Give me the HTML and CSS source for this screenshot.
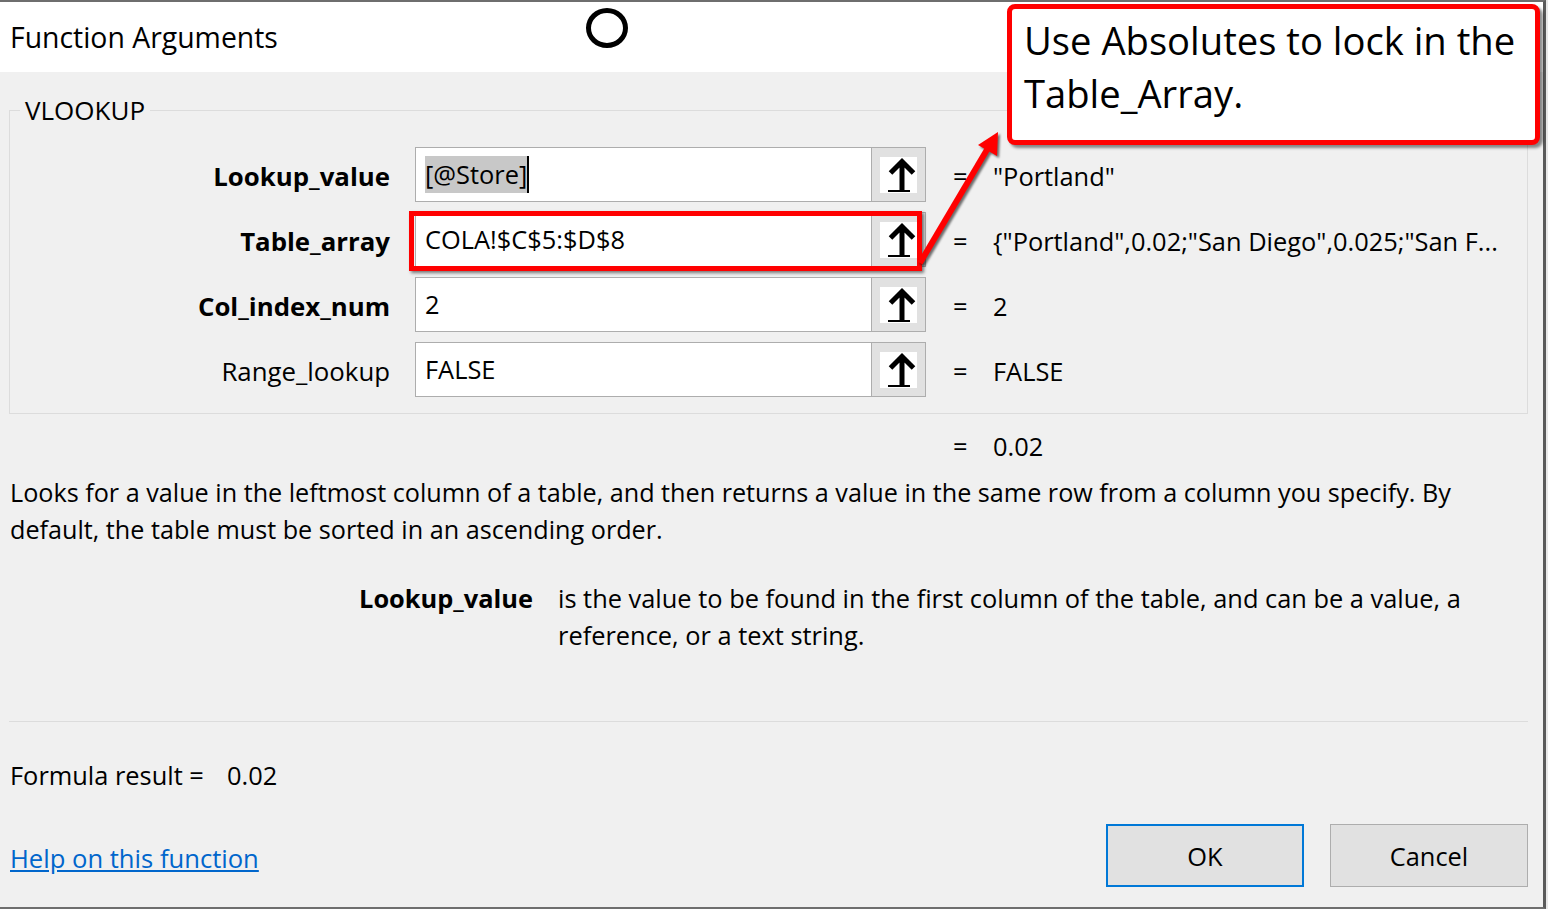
FILE: index.html
```html
<!DOCTYPE html>
<html>
<head>
<meta charset="utf-8">
<link rel="stylesheet" href="styles.css">
</head>
<body>
<div class="dialog">
  <div class="titlebar">Function Arguments</div>
  <div class="content">
    <fieldset class="group">
      <legend>VLOOKUP</legend>
      <div class="args">
        <div class="arg-label bold">Lookup_value</div>
        <div class="field">
          <div class="input"><span class="sel">[@Store]</span><span class="caret"></span></div>
          <div class="pick"><svg viewBox="0 0 37 36" class="pick-icon"><rect width="37" height="36" fill="#fff"/><path d="M22 33V5M10.5 16L22 4.5L33.5 16" fill="none" stroke="#000" stroke-width="5"/><rect x="8" y="33" width="22" height="2" fill="#000"/></svg></div>
        </div>
        <div class="arg-value"><span class="eq">=</span>"Portland"</div>

        <div class="arg-label bold">Table_array</div>
        <div class="field">
          <div class="input">COLA!$C$5:$D$8</div>
          <div class="pick"><svg viewBox="0 0 37 36" class="pick-icon"><rect width="37" height="36" fill="#fff"/><path d="M22 33V5M10.5 16L22 4.5L33.5 16" fill="none" stroke="#000" stroke-width="5"/><rect x="8" y="33" width="22" height="2" fill="#000"/></svg></div>
          <div class="highlight"></div>
        </div>
        <div class="arg-value"><span class="eq">=</span>{"Portland",0.02;"San Diego",0.025;"San F...</div>

        <div class="arg-label bold">Col_index_num</div>
        <div class="field">
          <div class="input">2</div>
          <div class="pick"><svg viewBox="0 0 37 36" class="pick-icon"><rect width="37" height="36" fill="#fff"/><path d="M22 33V5M10.5 16L22 4.5L33.5 16" fill="none" stroke="#000" stroke-width="5"/><rect x="8" y="33" width="22" height="2" fill="#000"/></svg></div>
        </div>
        <div class="arg-value"><span class="eq">=</span>2</div>

        <div class="arg-label">Range_lookup</div>
        <div class="field">
          <div class="input">FALSE</div>
          <div class="pick"><svg viewBox="0 0 37 36" class="pick-icon"><rect width="37" height="36" fill="#fff"/><path d="M22 33V5M10.5 16L22 4.5L33.5 16" fill="none" stroke="#000" stroke-width="5"/><rect x="8" y="33" width="22" height="2" fill="#000"/></svg></div>
        </div>
        <div class="arg-value"><span class="eq">=</span>FALSE</div>
      </div>
    </fieldset>

    <div class="result-row"><span class="eq">=</span>0.02</div>

    <p class="desc">Looks for a value in the leftmost column of a table, and then returns a value in the same row from a column you specify. By<br>default, the table must be sorted in an ascending order.</p>

    <div class="arg-help">
      <div class="help-name">Lookup_value</div>
      <div class="help-text">is the value to be found in the first column of the table, and can be a value, a<br>reference, or a text string.</div>
    </div>

    <div class="separator"></div>

    <div class="formula"><span class="formula-label">Formula result =</span>0.02</div>

    <div class="footer">
      <a class="help-link" href="#">Help on this function</a>
      <div class="buttons">
        <button class="btn btn-default">OK</button>
        <button class="btn">Cancel</button>
      </div>
    </div>
  </div>
</div>

<div class="record-dot"></div>
<div class="callout">Use Absolutes to lock in the<br>Table_Array.</div>
<svg class="pointer" width="1548" height="909" viewBox="0 0 1548 909">
  <line x1="920" y1="263" x2="988" y2="148" stroke="#ff0000" stroke-width="6"/>
  <polygon points="998,132 997,156 978,145" fill="#ff0000"/>
</svg>
</body>
</html>
```

FILE: styles.css
```css
* { box-sizing: border-box; }
html, body {
  margin: 0;
  padding: 0;
}
body {
  width: 1548px;
  height: 909px;
  overflow: hidden;
  background: #e8e8e8;
  font-family: "Open Sans", "Noto Sans", sans-serif;
  color: #000;
  position: relative;
}
.dialog {
  width: 1546px;
  height: 909px;
  background: #f0f0f0;
  border-top: 2px solid #6e6e6e;
  border-right: 3px solid #5a5a5a;
  border-bottom: 2px solid #6e6e6e;
}
.titlebar {
  height: 70px;
  background: #fff;
  padding-left: 10px;
  font-size: 28.4px;
  line-height: 70px;
}
.content {
  padding: 0 15px 0 0;
}
.group {
  margin: 23px 0 0 9px;
  padding: 22px 0 16px 0;
  border: 1px solid #dcdcdc;
  min-width: 0;
}
.group legend {
  margin-left: 10px;
  padding: 0 5px;
  font-size: 26px;
  line-height: 30px;
}
.args {
  display: grid;
  grid-template-columns: 380px 511px 1fr;
  column-gap: 25px;
  row-gap: 10px;
  grid-auto-rows: 55px;
}
.arg-label {
  text-align: right;
  font-size: 25.8px;
  padding-top: 4px;
  line-height: 51px;
}
.bold { font-weight: 700; }
.field {
  display: flex;
  position: relative;
  height: 55px;
}
.input {
  flex: 1;
  background: #fff;
  border: 1px solid #adadad;
  border-right: none;
  padding-left: 9px;
  font-size: 25.4px;
  line-height: 53px;
  white-space: nowrap;
  display: flex;
  align-items: center;
}
.sel {
  background: #c8c8c8;
  line-height: 37px;
}
.caret {
  display: inline-block;
  width: 2px;
  height: 37px;
  background: #000;
}
.pick {
  width: 55px;
  background: #e1e1e1;
  border: 1px solid #adadad;
  display: flex;
  align-items: center;
  justify-content: center;
}
.pick-icon {
  width: 37px;
  height: 36px;
  display: block;
}
.highlight {
  position: absolute;
  left: -6px;
  top: -1px;
  width: 513px;
  height: 60px;
  border: 5px solid #ff0000;
  box-shadow: 2px 2px 3px rgba(0, 0, 0, 0.5);
}
.arg-value {
  font-size: 25.4px;
  padding-top: 4px;
  line-height: 51px;
  white-space: nowrap;
  padding-left: 2px;
}
.eq {
  display: inline-block;
  width: 40px;
}
.result-row {
  margin: 14px 0 0 953px;
  font-size: 25.4px;
  line-height: 37px;
}
.desc {
  margin: 9px 0 0 10px;
  font-size: 25.2px;
  line-height: 37px;
  white-space: nowrap;
}
.arg-help {
  display: grid;
  grid-template-columns: 523px 1fr;
  column-gap: 25px;
  margin: 32px 0 0 10px;
  font-size: 25.4px;
  line-height: 37px;
}
.help-name {
  text-align: right;
  font-weight: 700;
}
.help-text { white-space: nowrap; }
.separator {
  margin: 67px 0 0 9px;
  height: 1px;
  background: #dcdcdc;
}
.formula {
  margin: 35px 0 0 10px;
  font-size: 25.4px;
  line-height: 37px;
}
.formula-label {
  display: inline-block;
  width: 217px;
}
.footer {
  display: flex;
  justify-content: space-between;
  align-items: center;
  margin: 30px 0 0 10px;
}
.help-link {
  font-size: 25.6px;
  color: #0066cc;
  text-decoration: underline;
  padding-top: 6px;
}
.buttons {
  display: flex;
  gap: 26px;
}
.btn {
  width: 198px;
  height: 63px;
  background: #e1e1e1;
  border: 1px solid #adadad;
  font-family: inherit;
  font-size: 25.4px;
  color: #000;
  padding: 0;
}
.btn-default {
  border: 2px solid #0078d7;
}
.record-dot {
  position: absolute;
  left: 586px;
  top: 8px;
  width: 42px;
  height: 40px;
  border: 5px solid #000;
  border-radius: 50%;
}
.callout {
  position: absolute;
  left: 1007px;
  top: 4px;
  width: 533px;
  height: 141px;
  background: #fff;
  border: 5px solid #ff0000;
  border-radius: 8px;
  box-shadow: 3px 3px 3px rgba(0, 0, 0, 0.45);
  padding: 5px 0 0 12px;
  font-size: 38.2px;
  line-height: 53px;
  white-space: nowrap;
}
.pointer {
  position: absolute;
  left: 0;
  top: 0;
  pointer-events: none;
  filter: drop-shadow(2px 2px 1px rgba(0, 0, 0, 0.55));
}
```
